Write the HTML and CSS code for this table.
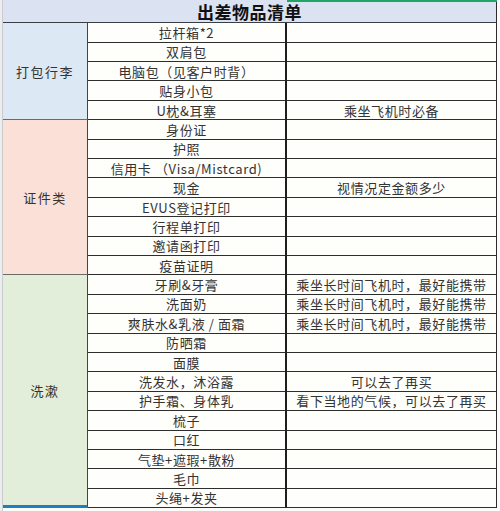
FILE: index.html
```html
<!DOCTYPE html>
<html lang="zh">
<head>
<meta charset="utf-8">
<title>出差物品清单</title>
<link rel="stylesheet" href="styles.css">
</head>
<body>
<div class="page">
  <div class="strip"></div>
  <div class="sheet">
    <div class="title">出差物品清单</div>

    <div class="cat cat-blue" style="grid-row: span 5">打包行李</div>
    <div class="item">拉杆箱*2</div><div class="note"></div>
    <div class="item">双肩包</div><div class="note"></div>
    <div class="item">电脑包（见客户时背）</div><div class="note"></div>
    <div class="item">贴身小包</div><div class="note"></div>
    <div class="item">U枕&amp;耳塞</div><div class="note">乘坐飞机时必备</div>

    <div class="cat cat-pink" style="grid-row: span 8">证件类</div>
    <div class="item">身份证</div><div class="note"></div>
    <div class="item">护照</div><div class="note"></div>
    <div class="item">信用卡 （Visa/Mistcard)</div><div class="note"></div>
    <div class="item">现金</div><div class="note">视情况定金额多少</div>
    <div class="item">EVUS登记打印</div><div class="note"></div>
    <div class="item">行程单打印</div><div class="note"></div>
    <div class="item">邀请函打印</div><div class="note"></div>
    <div class="item">疫苗证明</div><div class="note"></div>

    <div class="cat cat-green" style="grid-row: span 12">洗漱</div>
    <div class="item">牙刷&amp;牙膏</div><div class="note">乘坐长时间飞机时，最好能携带</div>
    <div class="item">洗面奶</div><div class="note">乘坐长时间飞机时，最好能携带</div>
    <div class="item">爽肤水&amp;乳液 / 面霜</div><div class="note">乘坐长时间飞机时，最好能携带</div>
    <div class="item">防晒霜</div><div class="note"></div>
    <div class="item">面膜</div><div class="note"></div>
    <div class="item">洗发水，沐浴露</div><div class="note">可以去了再买</div>
    <div class="item">护手霜、身体乳</div><div class="note">看下当地的气候，可以去了再买</div>
    <div class="item">梳子</div><div class="note"></div>
    <div class="item">口红</div><div class="note"></div>
    <div class="item">气垫+遮瑕+散粉</div><div class="note"></div>
    <div class="item">毛巾</div><div class="note"></div>
    <div class="item">头绳+发夹</div><div class="note"></div>
  </div>
  <div class="select-mark"></div>
</div>
</body>
</html>
```

FILE: styles.css
```css
* { box-sizing: border-box; }

html, body {
  margin: 0;
  padding: 0;
  background: #fbfbf9;
}

.page {
  position: relative;
  display: flex;
  width: 500px;
  height: 511px;
  overflow: hidden;
  font-family: "Noto Sans CJK SC", "Noto Sans", sans-serif;
  color: #333;
}

.strip {
  width: 3px;
  flex: none;
  background: #ecedef;
  border-right: 1px solid #c9cbcf;
}

.sheet {
  display: grid;
  grid-template-columns: 85px 199px 210px;
  grid-template-rows: 23.3px repeat(25, 19.4px);
  align-self: flex-start;
}

.title {
  grid-column: 1 / span 3;
  background: #dbe2f1;
  border-bottom: 1px solid #3a3f47;
  border-right: 1px solid #2b2b2b;
  display: flex;
  align-items: center;
  justify-content: center;
  font-size: 17px;
  line-height: 1;
  font-weight: 700;
  color: #111;
  letter-spacing: 0.5px;
}

.cat {
  display: flex;
  align-items: center;
  justify-content: center;
  font-size: 13px;
  line-height: 1;
  letter-spacing: 1.5px;
  border-right: 1px solid #444;
  border-bottom: 1px solid #6b6b6b;
}

.cat-blue { background: #dce8f4; }
.cat-pink { background: #fae0d6; }
.cat-green {
  background: #e2eed9;
  border-bottom: 3px solid #1d7fc0;
}

.item, .note {
  display: flex;
  align-items: center;
  justify-content: center;
  font-size: 13px;
  line-height: 1;
  letter-spacing: 0.6px;
  white-space: nowrap;
  background: #fefefb;
  border-bottom: 1px solid #2e2e2e;
}

.item {
  border-right: 2px solid #1e1e1e;
}

.note {
  border-right: 1px solid #2b2b2b;
}

.select-mark {
  position: absolute;
  top: 0;
  left: 287px;
  width: 210px;
  height: 2px;
  background: #21a464;
}
```
